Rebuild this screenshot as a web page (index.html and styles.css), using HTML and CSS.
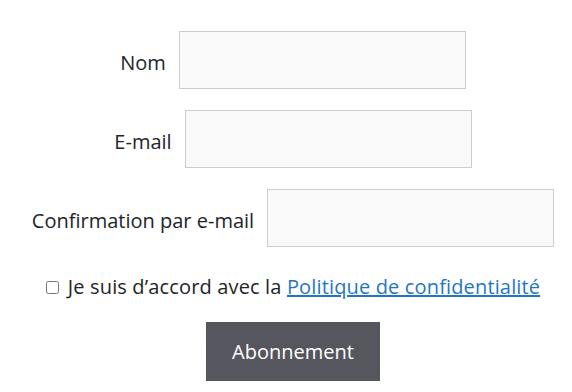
FILE: index.html
```html
<!DOCTYPE html>
<html lang="fr">
<head>
<meta charset="utf-8">
<link rel="stylesheet" href="styles.css">
</head>
<body>
<form class="form">
  <div class="row">
    <label class="label" for="nom">Nom</label>
    <input class="field" id="nom" type="text">
  </div>
  <div class="row">
    <label class="label" for="email">E-mail</label>
    <input class="field" id="email" type="email">
  </div>
  <div class="row">
    <label class="label" for="email2">Confirmation par e-mail</label>
    <input class="field" id="email2" type="email">
  </div>
  <div class="consent">
    <input class="check" type="checkbox" id="ok">
    <label class="consent-text" for="ok">Je suis d’accord avec la <a class="link" href="#">Politique de confidentialité</a></label>
  </div>
  <button class="btn" type="button">Abonnement</button>
</form>
</body>
</html>
```
FILE: styles.css
```css
html, body {
  margin: 0;
  padding: 0;
  background: #fff;
}
body {
  font-family: "Open Sans", "Noto Sans", sans-serif;
  font-size: 20px;
  color: #212529;
}
.form {
  display: flex;
  flex-direction: column;
  align-items: center;
  gap: 21px;
  padding: 31px 0 0 14px;
}
.row {
  display: flex;
  align-items: center;
  gap: 13px;
}
.label {
  line-height: 26px;
  padding-top: 5px;
}
.field {
  box-sizing: border-box;
  width: 287px;
  height: 58px;
  margin: 0;
  border: 1px solid #cccccc;
  background: #f9f9f9;
  border-radius: 0;
  font: inherit;
}
.consent {
  display: flex;
  align-items: center;
  gap: 9px;
  margin-top: 6px;
  line-height: 26px;
}
.consent-text {
  letter-spacing: 0.15px;
}
.check {
  width: 13px;
  height: 13px;
  margin: 0;
}
.link {
  color: #1f76c5;
  text-decoration: underline;
}
.btn {
  margin-top: 1px;
  width: 174px;
  height: 59px;
  border: none;
  border-radius: 0;
  background: #55565e;
  color: #fff;
  font: inherit;
}
```
